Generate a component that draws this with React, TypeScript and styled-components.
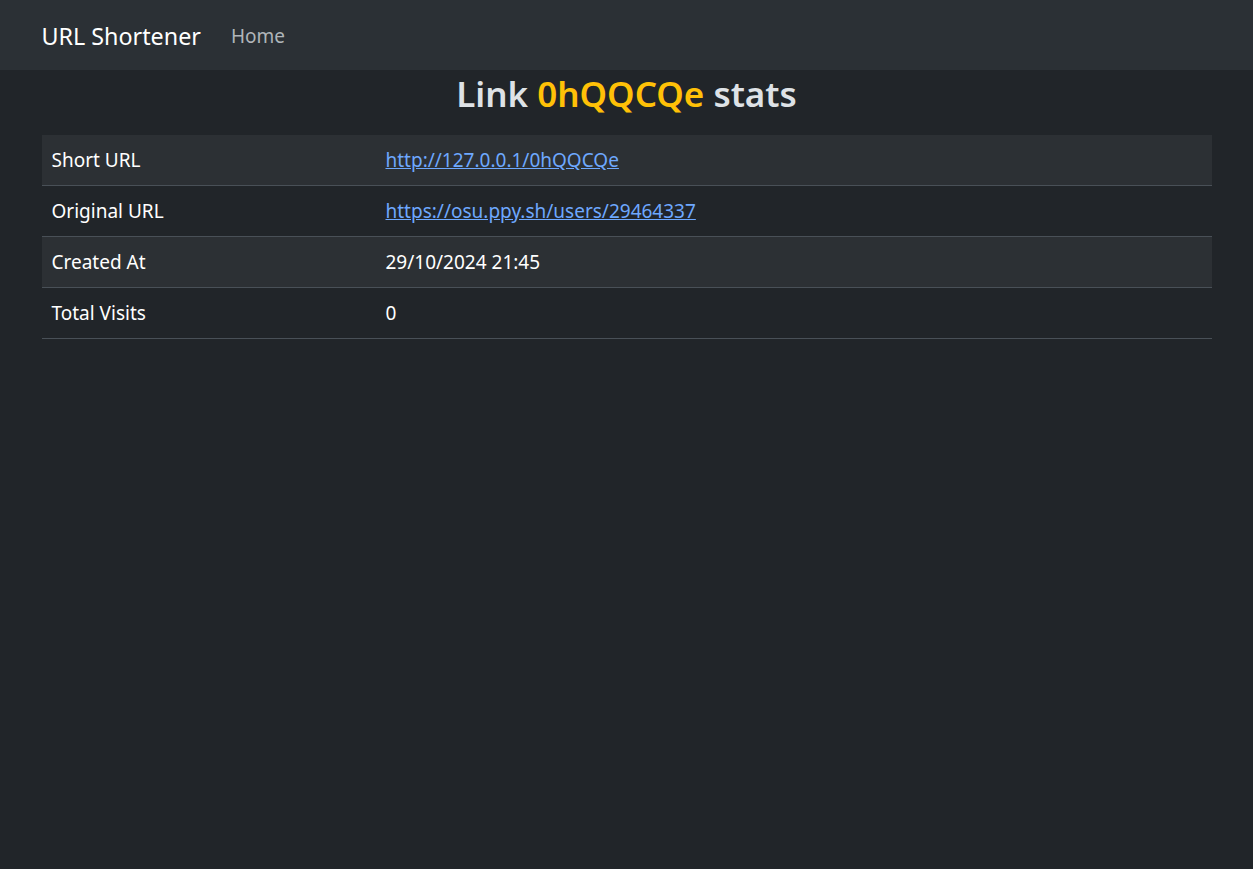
import React from "react";
import styled, { createGlobalStyle } from "styled-components";

const Global = createGlobalStyle`
  html, body { margin: 0; padding: 0; background: #212529; }
  body {
    font-family: "Segoe UI", "Noto Sans", "Liberation Sans", sans-serif;
    color: #dee2e6;
    font-size: 19px;
    line-height: 1.5;
  }
  #root { min-height: 100vh; background: #212529; }
`;

const NavBar = styled.nav`
  background: #2b3035;
  height: 70px;
  display: flex;
  align-items: center;
`;

const Container = styled.div`
  width: 1170px;
  margin: 0 auto;
  display: flex;
  align-items: center;
  padding-top: 2px;
`;

const Brand = styled.a`
  font-size: 23.3px;
  color: #fff;
  text-decoration: none;
  margin-right: 20px;
  line-height: 36px;
`;

const NavLink = styled.a`
  font-size: 19px;
  color: rgba(222, 226, 230, 0.75);
  text-decoration: none;
  padding: 0 10px;
`;

const Main = styled.main`
  width: 1170px;
  margin: 0 auto;
  display: flex;
  flex-direction: column;
`;

const Title = styled.h2`
  margin: 0 0 17px;
  text-align: center;
  font-size: 35px;
  font-weight: 600;
  line-height: 48px;
  color: #dee2e6;
`;

const Code = styled.span`
  color: #ffc107;
`;

const Table = styled.table`
  width: 100%;
  border-collapse: collapse;
`;

const Row = styled.tr<{ $striped: boolean }>`
  background: ${(p) => (p.$striped ? "#2c3034" : "transparent")};
  border-bottom: 1px solid #495057;
`;

const Cell = styled.td<{ $label?: boolean }>`
  padding: 10px;
  height: 30px;
  color: #fff;
  font-size: 19px;
  line-height: 30px;
  width: ${(p) => (p.$label ? "314px" : "auto")};
`;

const Link = styled.a`
  color: #6ea8fe;
  text-decoration: underline;
`;

const rows: { label: string; value: string; href?: string }[] = [
  { label: "Short URL", value: "http://127.0.0.1/0hQQCQe", href: "#" },
  { label: "Original URL", value: "https://osu.ppy.sh/users/29464337", href: "#" },
  { label: "Created At", value: "29/10/2024 21:45" },
  { label: "Total Visits", value: "0" },
];

export default function App() {
  return (
    <>
      <Global />
      <NavBar>
        <Container>
          <Brand href="#">URL Shortener</Brand>
          <NavLink href="#">Home</NavLink>
        </Container>
      </NavBar>
      <Main>
        <Title>
          Link <Code>0hQQCQe</Code> stats
        </Title>
        <Table>
          <tbody>
            {rows.map((r, i) => (
              <Row key={r.label} $striped={i % 2 === 0}>
                <Cell $label>{r.label}</Cell>
                <Cell>{r.href ? <Link href={r.href}>{r.value}</Link> : r.value}</Cell>
              </Row>
            ))}
          </tbody>
        </Table>
      </Main>
    </>
  );
}
